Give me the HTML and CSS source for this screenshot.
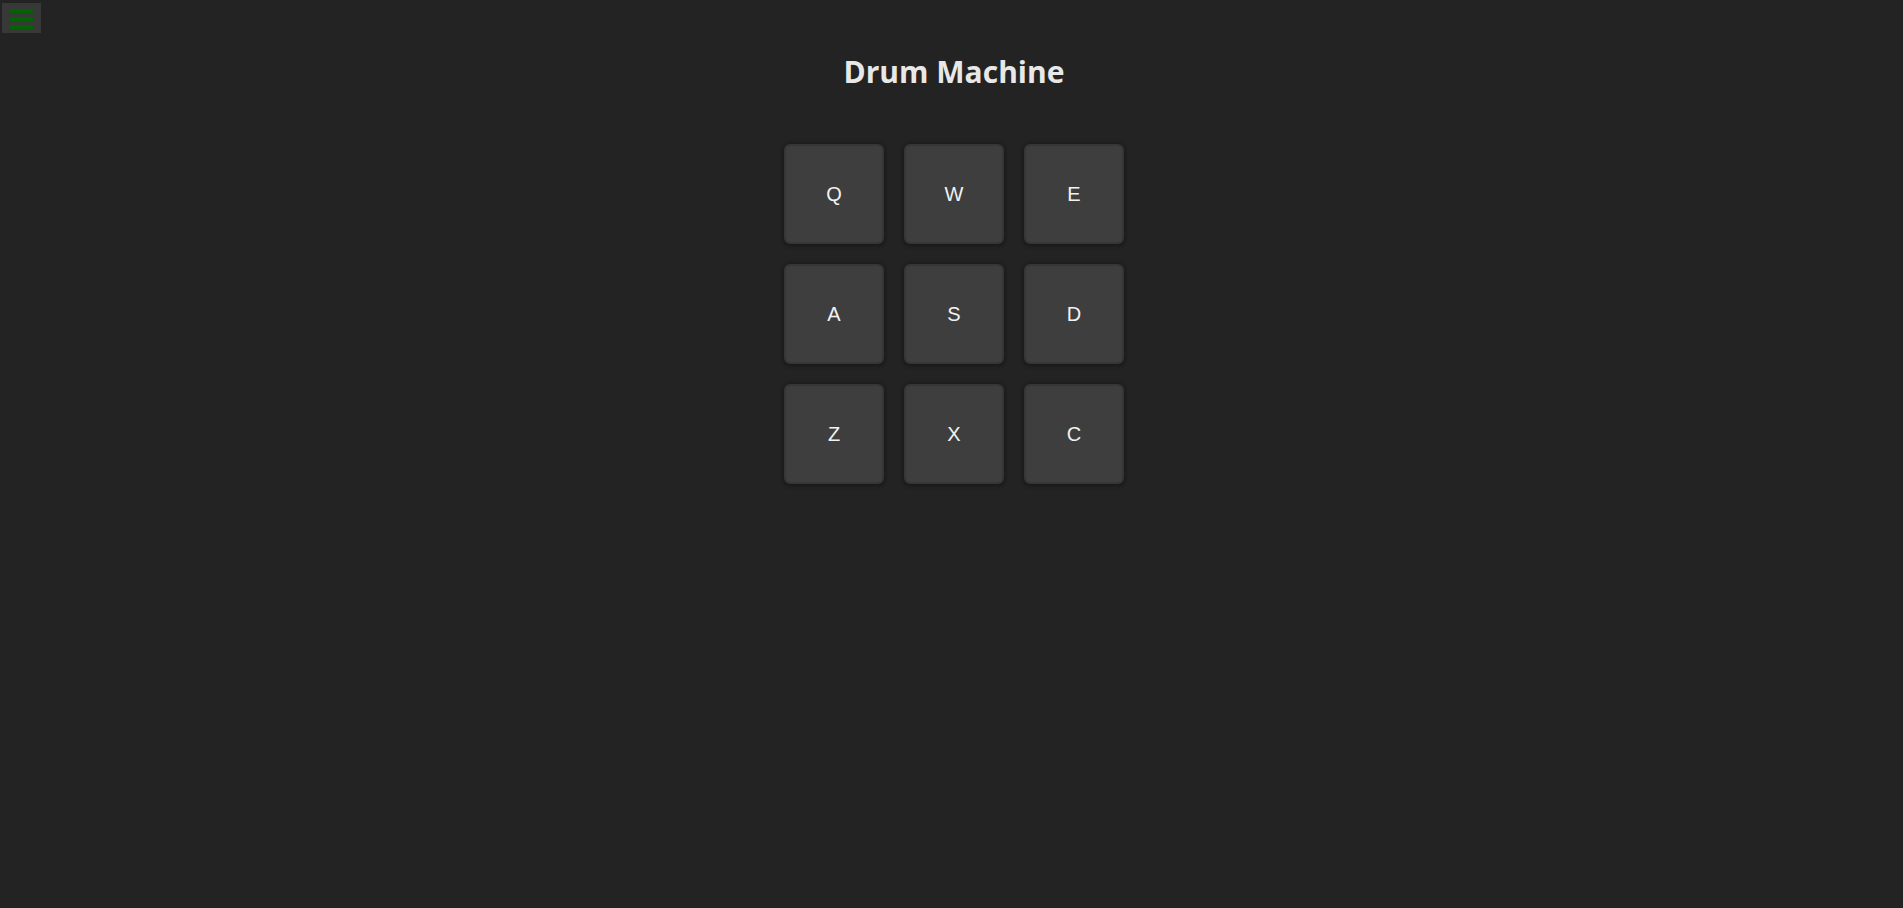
FILE: index.html
```html
<!DOCTYPE html>
<html>
<head>
<meta charset="utf-8">
<link rel="stylesheet" href="styles.css">
<title>Drum Machine</title>
</head>
<body>
<button class="menu" aria-label="menu">
  <span class="bar"></span>
  <span class="bar"></span>
  <span class="bar"></span>
</button>
<main class="machine">
  <h1 class="title">Drum Machine</h1>
  <div class="pads">
    <div class="pad">Q</div>
    <div class="pad">W</div>
    <div class="pad">E</div>
    <div class="pad">A</div>
    <div class="pad">S</div>
    <div class="pad">D</div>
    <div class="pad">Z</div>
    <div class="pad">X</div>
    <div class="pad">C</div>
  </div>
</main>
</body>
</html>
```
FILE: styles.css
```css
html, body {
  margin: 0;
  padding: 0;
  background: #232323;
  height: 100%;
}
body {
  font-family: "Liberation Sans", Arial, sans-serif;
  color: #e8e8e8;
}
.menu {
  position: absolute;
  left: 2px;
  top: 3px;
  width: 39px;
  height: 30px;
  margin: 0;
  padding: 6px 0 0 0;
  box-sizing: border-box;
  border: none;
  background: #383838;
  display: flex;
  flex-direction: column;
  justify-content: flex-start;
  align-items: center;
  gap: 4px;
  cursor: pointer;
}
.bar {
  display: block;
  width: 25px;
  height: 4px;
  border-radius: 2px;
  background: #006400;
}
.machine {
  display: flex;
  flex-direction: column;
  align-items: center;
  padding-left: 5px;
  padding-top: 52px;
}
.title {
  margin: 0;
  font-family: "Open Sans", "Noto Sans", sans-serif;
  font-weight: 700;
  font-size: 30px;
  line-height: 40px;
  color: #e8e8e8;
}
.pads {
  margin-top: 52px;
  display: grid;
  grid-template-columns: repeat(3, 100px);
  grid-auto-rows: 100px;
  gap: 20px;
}
.pad {
  box-sizing: border-box;
  display: flex;
  align-items: center;
  justify-content: center;
  background: #3e3e3e;
  border: 2px solid #363636;
  border-radius: 6px;
  box-shadow: 0 0 5px rgba(0, 0, 0, 0.3), 0 2px 4px rgba(0, 0, 0, 0.2);
  font-size: 20px;
  color: #f2f2f2;
}
```
